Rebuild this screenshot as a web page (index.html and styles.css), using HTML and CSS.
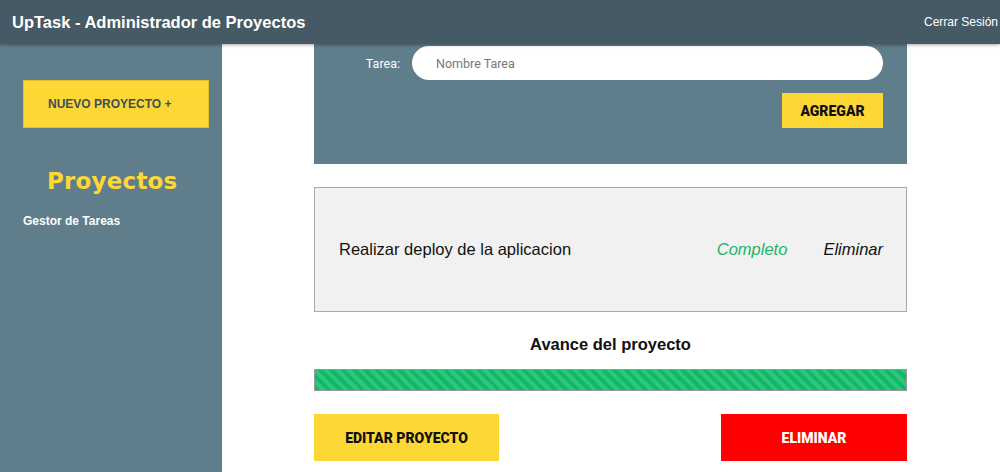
FILE: index.html
```html
<!DOCTYPE html>
<html lang="es">
<head>
<meta charset="utf-8">
<title>UpTask</title>
<link rel="stylesheet" href="styles.css">
</head>
<body>
<header class="topbar">
  <h1 class="brand">UpTask - Administrador de Proyectos</h1>
  <a class="logout" href="#">Cerrar Sesión</a>
</header>
<div class="layout">
  <aside class="sidebar">
    <a class="btn-new" href="#">NUEVO PROYECTO +</a>
    <h2 class="side-title">Proyectos</h2>
    <ul class="project-list">
      <li>Gestor de Tareas</li>
    </ul>
  </aside>
  <main class="main">
    <div class="content">
      <form class="task-form">
        <div class="field">
          <label class="field-label">Tarea:</label>
          <div class="input">Nombre Tarea</div>
        </div>
        <div class="form-actions">
          <button type="button" class="btn btn-add">AGREGAR</button>
        </div>
      </form>
      <ul class="tasks">
        <li class="task">
          <span class="task-name">Realizar deploy de la aplicacion</span>
          <div class="task-actions">
            <span class="done">Completo</span>
            <span class="remove">Eliminar</span>
          </div>
        </li>
      </ul>
      <h3 class="progress-title">Avance del proyecto</h3>
      <div class="progress"><div class="progress-bar" style="width:100%"></div></div>
      <div class="bottom-actions">
        <button type="button" class="btn btn-edit">EDITAR PROYECTO</button>
        <button type="button" class="btn btn-delete">ELIMINAR</button>
      </div>
    </div>
  </main>
</div>
</body>
</html>
```
FILE: styles.css
```css
* { box-sizing: border-box; }
html, body { margin: 0; padding: 0; height: 100%; }
body {
  font-family: "Liberation Sans", Arial, sans-serif;
  background: #fff;
  overflow: hidden;
}
.topbar {
  height: 44px;
  background: #455a64;
  display: flex;
  align-items: center;
  justify-content: space-between;
  padding: 0 0 0 12px;
  box-shadow: 0 1px 3px rgba(0,0,0,0.35);
  position: relative;
  z-index: 2;
}
.brand {
  margin: 0;
  color: #fff;
  font-size: 16.5px;
  font-weight: bold;
}
.logout {
  color: #fff;
  text-decoration: none;
  font-size: 12px;
  margin-right: 2px;
}
.layout {
  display: flex;
  height: 428px;
}
.sidebar {
  width: 222px;
  flex: none;
  background: #607d8b;
  padding: 36px 0 0 23px;
}
.btn-new {
  display: flex;
  align-items: center;
  width: 186px;
  height: 48px;
  padding-left: 24px;
  background: #fdd835;
  border: 1px solid #e3c12a;
  color: #3f4f57;
  font-weight: bold;
  font-size: 12px;
  text-decoration: none;
}
.side-title {
  margin: 40px 0 0 24px;
  color: #fdd835;
  font-family: "DejaVu Sans", "Liberation Sans", sans-serif;
  font-weight: bold;
  font-size: 23px;
  letter-spacing: 0.2px;
}
.project-list {
  list-style: none;
  margin: 20px 0 0;
  padding: 0;
  color: #fff;
  font-weight: bold;
  font-size: 12px;
}
.main {
  flex: 1;
  background: #fff;
  padding-left: 92px;
}
.content {
  width: 593px;
}
.task-form {
  background: #607d8b;
  margin: 0;
  padding: 2px 24px 36px 0;
  height: 120px;
}
.field {
  display: flex;
  align-items: center;
}
.field-label {
  width: 86px;
  text-align: right;
  color: #fff;
  font-family: Roboto, "Liberation Sans", sans-serif;
  font-size: 12.5px;
  margin-right: 12px;
}
.input {
  flex: 1;
  height: 34px;
  background: #fff;
  border-radius: 17px;
  padding-left: 24px;
  display: flex;
  align-items: center;
  color: #777;
  font-family: Roboto, "Liberation Sans", sans-serif;
  font-size: 12.5px;
}
.form-actions {
  display: flex;
  justify-content: flex-end;
  margin-top: 13px;
}
.btn {
  border: none;
  font-family: Roboto, "Liberation Sans", sans-serif;
  font-weight: 900;
  font-size: 14px;
  cursor: pointer;
}
.btn-add {
  width: 101px;
  height: 35px;
  background: #fdd835;
  color: #111;
}
.tasks {
  list-style: none;
  margin: 23px 0 0;
  padding: 0;
}
.task {
  height: 125px;
  background: #f1f1f1;
  border: 1px solid #aaa;
  display: flex;
  align-items: center;
  justify-content: space-between;
  padding: 0 23px 0 24px;
  font-size: 16.5px;
}
.task-name { color: #111; }
.task-actions {
  display: flex;
  gap: 36px;
  font-style: italic;
}
.done { color: #1cb565; }
.remove { color: #111; }
.progress-title {
  margin: 22px 0 0;
  text-align: center;
  font-size: 16.5px;
  font-weight: bold;
  color: #111;
  line-height: 20px;
}
.progress {
  margin-top: 15px;
  height: 22px;
  border: 1px solid #999;
  background: #fff;
}
.progress-bar {
  height: 100%;
  background: #0dba68 repeating-linear-gradient(45deg, #0dba68 0 4px, #30c47e 4px 8px);
}
.bottom-actions {
  display: flex;
  justify-content: space-between;
  margin-top: 23px;
}
.btn-edit {
  width: 185px;
  height: 47px;
  background: #fdd835;
  color: #111;
}
.btn-delete {
  width: 186px;
  height: 47px;
  background: #ff0000;
  color: #fff;
}
```
